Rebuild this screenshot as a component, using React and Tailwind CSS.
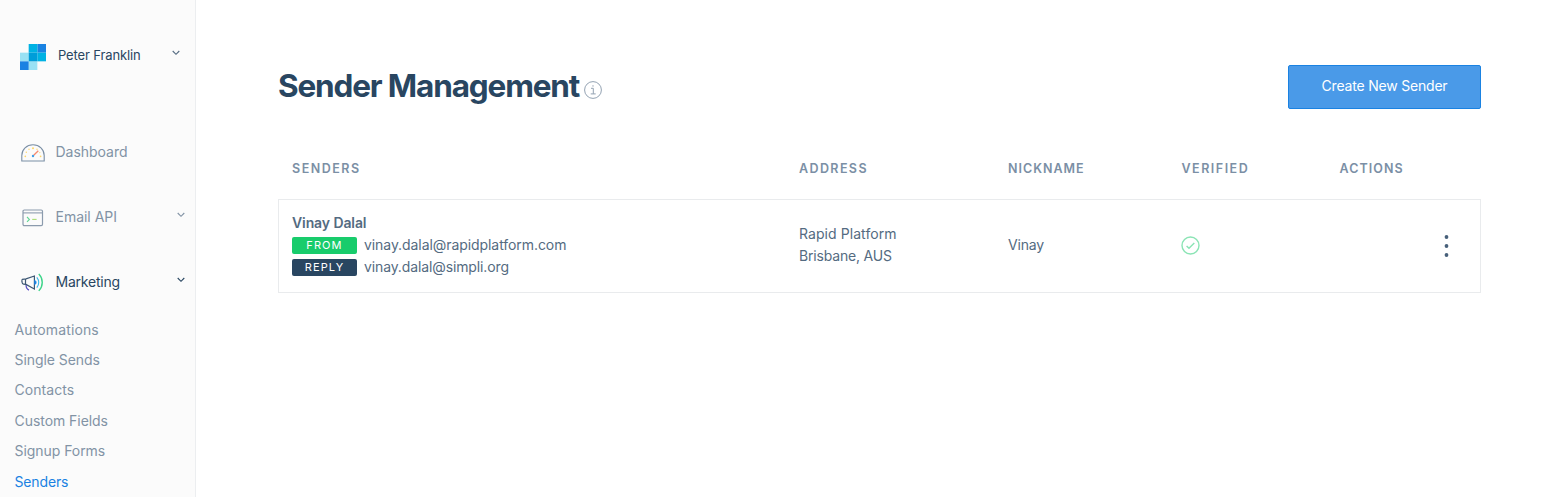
import React from "react";

function LogoMark() {
  return (
    <svg width="26" height="26" viewBox="0 0 27 27">
      <path d="M0 9h9v9H0z" fill="#99e1f4" />
      <path d="M9 18h9v9H9z" fill="#99e1f4" />
      <path d="M0 18h9v9H0z" fill="#1a82e2" />
      <path d="M18 0h9v9h-9z" fill="#1a82e2" />
      <path d="M9 0h9v9H9z" fill="#00b2e3" />
      <path d="M18 9h9v9h-9z" fill="#00b2e3" />
      <path d="M9 9h9v9H9z" fill="#009dd9" />
    </svg>
  );
}

function Chevron({ className }) {
  return (
    <svg className={className} width="8" height="6" viewBox="0 0 8 6" fill="none" stroke="currentColor" strokeWidth="1.1">
      <path d="M0.7 1 4 4.3 7.3 1" />
    </svg>
  );
}

function DashboardIcon() {
  return (
    <svg width="24" height="18" viewBox="0 0 24 18" fill="none">
      <path d="M.8 17v-5.600C.8 5.500 5.700.8 12 .8s11.200 4.700 11.200 10.600V17z" stroke="#7b8fa5" strokeWidth="1.1" />
      <g fill="#ffd666">
        <circle cx="12" cy="4.300" r="1" />
        <circle cx="8" cy="5.300" r=".7" />
        <circle cx="16" cy="5.300" r=".7" />
        <circle cx="5.300" cy="8.300" r=".7" />
        <circle cx="4.300" cy="12.300" r=".85" />
        <circle cx="19.600" cy="12.300" r=".85" />
        <circle cx="18.800" cy="8.600" r=".6" />
      </g>
      <path d="M12.700 11.300 17.300 6.700" stroke="#f58a70" strokeWidth="1.300" />
      <circle cx="12" cy="12" r="1.200" fill="#3f9fe8" />
    </svg>
  );
}

function TerminalIcon() {
  return (
    <svg width="22" height="18" viewBox="0 0 22 18" fill="none">
      <rect x="1" y="1" width="19.500" height="15.600" rx="1.300" stroke="#8b9bad" strokeWidth="1.200" />
      <path d="M1 3.900h19.500" stroke="#8b9bad" strokeWidth="1.100" />
      <path d="m5 8 2.400 2.400L5 12.800" stroke="#5fd695" strokeWidth="1.100" />
      <path d="M10.200 10.400h4.400" stroke="#a9df72" strokeWidth="1.100" />
    </svg>
  );
}

function MegaphoneIcon() {
  return (
    <svg width="24" height="20" viewBox="0 0 24 20" fill="none" strokeWidth="1.200">
      <path d="M5 11.500c0 3 .5 4.600 3 5.600" stroke="#5a4fc4" />
      <path d="M1.400 6.300 5 5.900 13.400 3v13L5 11.400l-2.600-.3c-.8 0-1.300-1-1.500-2.400-.1-1.200 0-2.100.5-2.400z" stroke="#3d5875" />
      <path d="M4.500 6v5.300" stroke="#3d5875" />
      <path d="M13.600 7.400c2 .3 2 3.800 0 4.100z" fill="#1a82e2" stroke="#1a82e2" strokeWidth=".8" />
      <path d="M15.800 4.400c2.500 3 2.500 7.200 0 10.300" stroke="#3cb8e8" />
      <path d="M17.800.9c4.600 5 4.600 12 0 17" stroke="#3dd489" strokeWidth="1.400" />
    </svg>
  );
}

function InfoIcon() {
  return (
    <svg width="18" height="18" viewBox="0 0 18 18" fill="none" stroke="#8797a9">
      <circle cx="9" cy="9" r="8.400" strokeWidth=".9" />
      <path d="M7 7.300h2.300v5.400M6.700 12.900h5" strokeWidth=".9" />
      <circle cx="9" cy="4.900" r=".7" fill="#8797a9" stroke="none" />
    </svg>
  );
}

const subItems = [
  ["Automations", "tracking-[0.130px]"],
  ["Single Sends", "tracking-[-0.060px]"],
  ["Contacts", "tracking-[0.050px]"],
  ["Custom Fields", "tracking-[-0.050px]"],
  ["Signup Forms", "tracking-[-0.050px]"],
  ["Senders", "tracking-[-0.150px]"],
];

function NavRow({ icon, label, active, chevron }) {
  return (
    <div className={active ? "flex h-[65.200px] items-start text-[#294661]" : "flex h-[65.200px] items-start text-[#8293a5]"}>
      <div className="flex h-[22px] w-[34.500px] items-center justify-start pt-[1px]">{icon}</div>
      <div className={active ? "flex-1 pt-[1px] text-[14px] leading-5 tracking-[-0.220px]" : "flex-1 pt-[1px] text-[14px] leading-5 tracking-[-0.020px]"}>{label}</div>
      {chevron && <Chevron className="mt-[6px] -mr-[0.500px]" />}
    </div>
  );
}

function Sidebar() {
  return (
    <aside className="h-[497px] w-[196px] shrink-0 border-r border-[#eceef0] bg-[#fbfbfb]">
      <div className="flex h-[141px] items-start pt-[43.500px] pr-[15.500px] pl-5">
        <LogoMark />
        <div className="ml-3 flex-1 text-[13px] leading-[22px] tracking-[-0.120px] text-[#294661]">Peter Franklin</div>
        <Chevron className="mt-[6.500px] text-[#546b81]" />
      </div>
      <nav className="pr-[11px] pl-[21px]">
        <NavRow icon={<DashboardIcon />} label="Dashboard" />
        <NavRow icon={<span className="pl-[1px]"><TerminalIcon /></span>} label="Email API" chevron />
        <NavRow icon={<MegaphoneIcon />} label="Marketing" chevron active />
      </nav>
      <ul className="-mt-[22px] pl-[14.500px] text-[14px]">
        {subItems.map(([t, tracking]) => (
          <li key={t} className={`${tracking} ${t === "Senders" ? "h-[30.400px] leading-[30.400px] text-[#1a82e2]" : "h-[30.400px] leading-[30.400px] text-[#8293a5]"}`}>
            {t}
          </li>
        ))}
      </ul>
    </aside>
  );
}

const cols = "grid grid-cols-[507px_209px_173.500px_158px_1fr]";

function Badge({ text, tone }) {
  return (
    <span className={`mr-[7px] h-[17px] w-[65px] rounded-[2px] pt-px text-center text-[11px] leading-[15px] tracking-[1.100px] text-white ${tone === "from" ? "bg-[#18cc6c]" : "bg-[#294661]"}`}>
      {text}
    </span>
  );
}

export default function App() {
  return (
    <div className="flex h-[501px] overflow-hidden bg-white font-['Inter',sans-serif]">
      <Sidebar />
      <main className="flex-1 pt-[65px] pr-[86px] pl-[82px]">
        <header className="flex h-[44px] items-start justify-between">
          <div className="flex items-start">
            <h1 className="text-[31.500px] leading-[41px] font-bold tracking-[-1.150px] whitespace-nowrap text-[#294661]">Sender Management</h1>
            <span className="mt-[15.500px] ml-[5px]"><InfoIcon /></span>
          </div>
          <button className="h-[44px] w-[193px] rounded-[2px] border border-[#1a82e2] bg-[#4a9ae8] pb-[2px] text-[14px] leading-[38px] tracking-[-0.200px] text-white">Create New Sender</button>
        </header>
        <div className={`${cols} pt-[49px] pl-[14px] text-[12.500px] leading-[22px] font-semibold text-[#7b8fa5]`}>
          <span className="tracking-[1.500px]">SENDERS</span>
          <span className="tracking-[1.400px]">ADDRESS</span>
          <span className="tracking-[1px]">NICKNAME</span>
          <span className="tracking-[1.500px]">VERIFIED</span>
          <span className="tracking-[1.050px]">ACTIONS</span>
        </div>
        <div className={`${cols} mt-[19px] h-[94px] items-center border border-[#e9ebed] pl-[13px] text-[14px] leading-[22px] text-[#546b81]`}>
          <div className="-mt-[2px]">
            <div className="font-semibold tracking-[-0.100px]">Vinay Dalal</div>
            <div className="flex items-center tracking-[-0.070px]"><Badge text="FROM" tone="from" />vinay.dalal@rapidplatform.com</div>
            <div className="flex items-center tracking-[-0.120px]"><Badge text="REPLY" tone="reply" />vinay.dalal@simpli.org</div>
          </div>
          <div className="-mt-[2px]">
            <div className="tracking-[0.070px]">Rapid Platform</div>
            <div className="tracking-[-0.180px]">Brisbane, AUS</div>
          </div>
          <div className="-mt-[2px] tracking-[-0.200px]">Vinay</div>
          <svg className="-mt-px -ml-[0.500px]" width="19" height="19" viewBox="0 0 19 19" fill="none" stroke="#8be4b5" strokeWidth="1.400">
            <circle cx="9.500" cy="9.500" r="8.500" />
            <path d="m5.600 9.900 2.400 2.400 5.300-5.300" />
          </svg>
          <svg className="mr-[31.500px] justify-self-end" width="5" height="24" viewBox="0 0 5 24" fill="#47607a">
            <circle cx="2.500" cy="3" r="1.900" />
            <circle cx="2.500" cy="12" r="1.900" />
            <circle cx="2.500" cy="21" r="1.900" />
          </svg>
        </div>
      </main>
    </div>
  );
}
